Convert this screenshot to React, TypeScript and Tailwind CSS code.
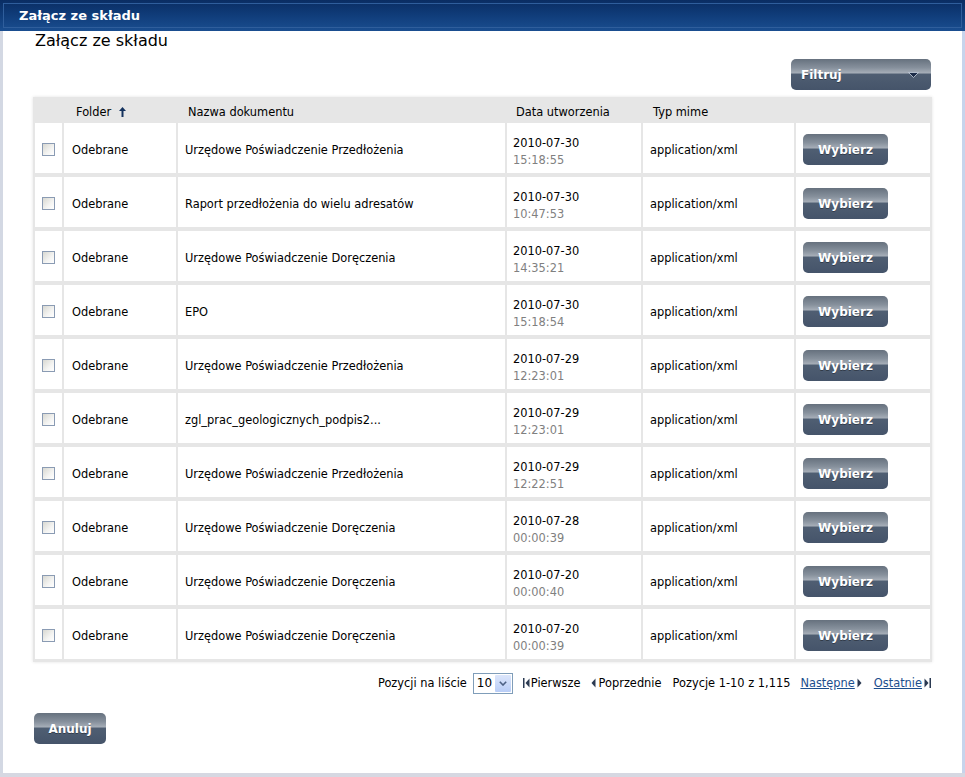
import React from "react";

const rows: [string, string, string][] = [
  ["Urzędowe Poświadczenie Przedłożenia", "2010-07-30", "15:18:55"],
  ["Raport przedłożenia do wielu adresatów", "2010-07-30", "10:47:53"],
  ["Urzędowe Poświadczenie Doręczenia", "2010-07-30", "14:35:21"],
  ["EPO", "2010-07-30", "15:18:54"],
  ["Urzędowe Poświadczenie Przedłożenia", "2010-07-29", "12:23:01"],
  ["zgl_prac_geologicznych_podpis2...", "2010-07-29", "12:23:01"],
  ["Urzędowe Poświadczenie Przedłożenia", "2010-07-29", "12:22:51"],
  ["Urzędowe Poświadczenie Doręczenia", "2010-07-28", "00:00:39"],
  ["Urzędowe Poświadczenie Doręczenia", "2010-07-20", "00:00:40"],
  ["Urzędowe Poświadczenie Doręczenia", "2010-07-20", "00:00:39"],
];

const btnBg =
  "bg-[linear-gradient(to_bottom,#66717e_0%,#86909c_28%,#a4acb6_44%,#4f5e72_50%,#45546a_100%)]";

function Checkbox() {
  return (
    <div className="w-[13px] h-[13px] border border-[#8a9bb3] bg-[linear-gradient(135deg,#d8d8d2_0%,#f4f4f2_60%,#ffffff_100%)]" />
  );
}

function FirstIcon() {
  return (
    <svg width="7" height="10" viewBox="0 0 7 10" className="block">
      <rect x="0" y="0" width="1.5" height="10" fill="#2b3a52" />
      <path d="M6.5 0.5 L2.5 5 L6.5 9.5 Z" fill="#2b3a52" />
    </svg>
  );
}
function PrevIcon() {
  return (
    <svg width="5" height="10" viewBox="0 0 5 10" className="block">
      <path d="M4.5 0.5 L0.5 5 L4.5 9.5 Z" fill="#2b3a52" />
    </svg>
  );
}
function NextIcon() {
  return (
    <svg width="5" height="10" viewBox="0 0 5 10" className="block">
      <path d="M0.5 0.5 L4.5 5 L0.5 9.5 Z" fill="#2b3a52" />
    </svg>
  );
}
function LastIcon() {
  return (
    <svg width="7" height="10" viewBox="0 0 7 10" className="block">
      <path d="M0.5 0.5 L4.5 5 L0.5 9.5 Z" fill="#2b3a52" />
      <rect x="5.5" y="0" width="1.5" height="10" fill="#2b3a52" />
    </svg>
  );
}

export default function App() {
  return (
    <div className="w-[965px] h-[777px] flex flex-col bg-white overflow-hidden [font-family:'DejaVu_Sans',Verdana,sans-serif] text-black">
      {/* Title bar */}
      <div className="h-[31px] shrink-0 p-[3px] bg-[linear-gradient(to_bottom,#0a2d63_0%,#0f3b78_45%,#1a4e90_100%)]">
        <div className="h-full border border-[#2f5e9c] flex items-center pl-[15px]">
          <span className="text-white font-bold text-[13px] leading-none">Załącz ze składu</span>
        </div>
      </div>

      <div className="flex-1 flex min-h-0">
        <div className="w-[3px] bg-[#d3d8e3]" />
        <div className="flex-1 flex flex-col">
          <div className="h-[20px] leading-[20px] pl-[32px] text-[16px]">Załącz ze składu</div>

          <div className="mt-[8px] flex justify-end pr-[31px]">
            <div className={`w-[140px] h-[31px] rounded-[5px] ${btnBg} flex items-center justify-between pl-[10px] pr-[12px]`}>
              <span className="text-white font-bold text-[12px] [text-shadow:0_1px_0_rgba(0,0,0,0.35)]">Filtruj</span>
              <svg width="11" height="6" viewBox="0 0 11 6" className="block">
                <path d="M0.5 0.5 L10.5 0.5 L5.5 5.5 Z" fill="#1c2c48" stroke="#c9d2de" strokeWidth="0.8" />
              </svg>
            </div>
          </div>

          {/* Table */}
          <div className="mt-[7px] ml-[30px] w-[899px] bg-[#e6e6e6] px-[2px] pt-[2px] pb-[3px] shadow-[0_0_3px_rgba(0,0,0,0.12)]">
            <div className="grid grid-cols-[27px_112px_327px_134px_151px_134px] gap-x-[2px] h-[24px] items-center pt-[3px] text-[11.4px]">
              <div />
              <div className="pl-[12px] flex items-center gap-[8px]">
                <span>Folder</span>
                <svg width="7" height="10" viewBox="0 0 7 10" className="block">
                  <path d="M3.5 0 L7 4 L4.5 4 L4.5 10 L2.5 10 L2.5 4 L0 4 Z" fill="#14325e" />
                </svg>
              </div>
              <div className="pl-[10px]">Nazwa dokumentu</div>
              <div className="pl-[9px]">Data utworzenia</div>
              <div className="pl-[10px]">Typ mime</div>
              <div />
            </div>
            <div className="flex flex-col gap-y-[4px]">
              {rows.map(([name, date, time], i) => (
                <div key={i} className="grid grid-cols-[27px_112px_327px_134px_151px_134px] gap-x-[2px] h-[50px] text-[11.4px]">
                  <div className="bg-white flex justify-center pt-[20px] pr-[1px]">
                    <Checkbox />
                  </div>
                  <div className="bg-white flex items-center pl-[8px] pt-[5px]">Odebrane</div>
                  <div className="bg-white flex items-center pl-[7px] pt-[5px]">{name}</div>
                  <div className="bg-white flex flex-col justify-center pl-[6px] pt-[7px] leading-[17px]">
                    <div>{date}</div>
                    <div className="text-[#808080]">{time}</div>
                  </div>
                  <div className="bg-white flex items-center pl-[7px] pt-[5px]">application/xml</div>
                  <div className="bg-white flex items-center pl-[7px] pt-[3px]">
                    <div className={`w-[85px] h-[31px] rounded-[5px] ${btnBg} flex items-center justify-center`}>
                      <span className="text-white font-bold text-[12px] [text-shadow:0_1px_0_rgba(0,0,0,0.35)]">Wybierz</span>
                    </div>
                  </div>
                </div>
              ))}
            </div>
          </div>

          {/* Pagination */}
          <div className="mt-[11px] h-[20px] flex items-center justify-end pr-[31px] text-[11.4px]">
            <span className="pt-[2px]">Pozycji na liście</span>
            <div className="ml-[6px] w-[40px] h-[21px] border border-[#7f9db9] flex items-center bg-white">
              <span className="pl-[3px] text-[12px] w-[20px]">10</span>
              <div className="ml-auto mr-[1px] w-[16px] h-[17px] bg-[linear-gradient(to_bottom,#dce6fb,#b9cdf7)] flex items-center justify-center rounded-[1px]">
                <svg width="8" height="5" viewBox="0 0 8 5" className="block">
                  <path d="M0.8 0.8 L4 4 L7.2 0.8" fill="none" stroke="#4d6185" strokeWidth="1.6" />
                </svg>
              </div>
            </div>
            <span className="ml-[10px] flex items-center">
              <FirstIcon />
            </span>
            <span className="ml-[1px] pt-[2px]">Pierwsze</span>
            <span className="ml-[10px] flex items-center">
              <PrevIcon />
            </span>
            <span className="ml-[3px] pt-[2px]">Poprzednie</span>
            <span className="ml-[11px] pt-[2px]">Pozycje 1-10 z 1,115</span>
            <span className="ml-[10px] pt-[2px] text-[#1c4f8e] underline">Następne</span>
            <span className="ml-[2px] flex items-center">
              <NextIcon />
            </span>
            <span className="ml-[12px] pt-[2px] text-[#1c4f8e] underline">Ostatnie</span>
            <span className="ml-[2px] flex items-center">
              <LastIcon />
            </span>
          </div>

          <div className="mt-[20px] pl-[31px]">
            <div className={`w-[72px] h-[31px] rounded-[5px] ${btnBg} flex items-center justify-center`}>
              <span className="text-white font-bold text-[12px] [text-shadow:0_1px_0_rgba(0,0,0,0.35)]">Anuluj</span>
            </div>
          </div>
        </div>
        <div className="w-[3px] bg-[#c7d4ec]" />
      </div>
      <div className="h-[4px] shrink-0 bg-[#d6d8e2]" />
    </div>
  );
}
